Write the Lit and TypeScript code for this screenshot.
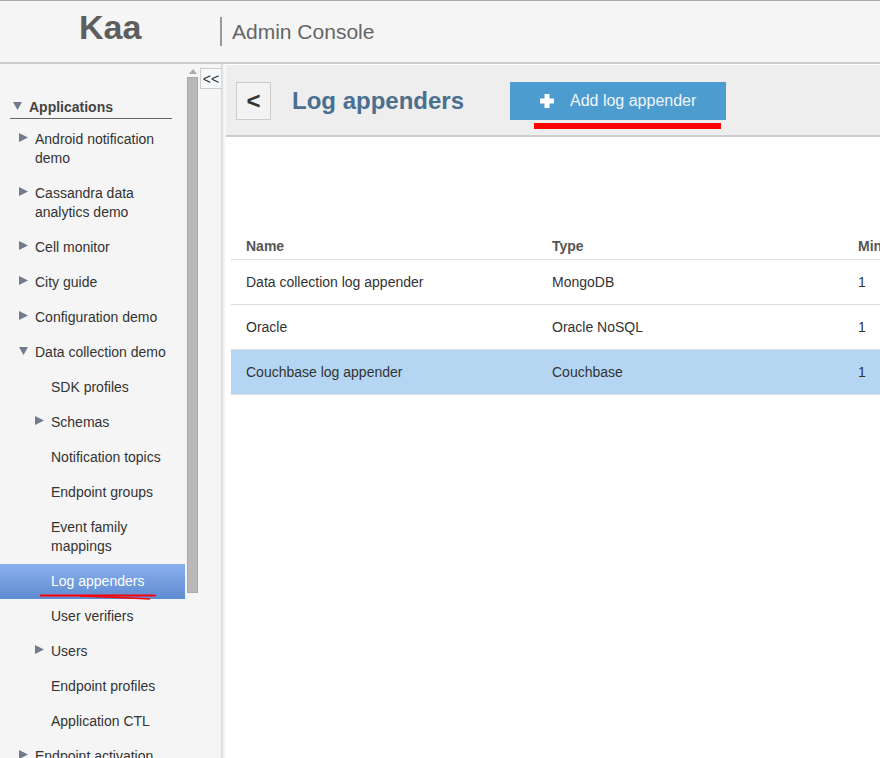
import { LitElement, css, html, svg } from 'lit'
import { customElement } from 'lit/decorators.js'

type TreeRow = { label: string; depth: number; arrow?: 'open' | 'closed'; selected?: boolean }

const treeRows: TreeRow[] = [
  { label: 'Android notification demo', depth: 0, arrow: 'closed' },
  { label: 'Cassandra data analytics demo', depth: 0, arrow: 'closed' },
  { label: 'Cell monitor', depth: 0, arrow: 'closed' },
  { label: 'City guide', depth: 0, arrow: 'closed' },
  { label: 'Configuration demo', depth: 0, arrow: 'closed' },
  { label: 'Data collection demo', depth: 0, arrow: 'open' },
  { label: 'SDK profiles', depth: 1 },
  { label: 'Schemas', depth: 1, arrow: 'closed' },
  { label: 'Notification topics', depth: 1 },
  { label: 'Endpoint groups', depth: 1 },
  { label: 'Event family mappings', depth: 1 },
  { label: 'Log appenders', depth: 1, selected: true },
  { label: 'User verifiers', depth: 1 },
  { label: 'Users', depth: 1, arrow: 'closed' },
  { label: 'Endpoint profiles', depth: 1 },
  { label: 'Application CTL', depth: 1 },
  { label: 'Endpoint activation', depth: 0, arrow: 'closed' }
]

const appenders = [
  { name: 'Data collection log appender', type: 'MongoDB', min: '1' },
  { name: 'Oracle', type: 'Oracle NoSQL', min: '1' },
  { name: 'Couchbase log appender', type: 'Couchbase', min: '1', selected: true }
]

const arrowClosed = svg`<path d="M0 0 L9 4.5 L0 9 Z" fill="#727b8c"/>`
const arrowOpen = svg`<path d="M0 1 L9 1 L4.5 9 Z" fill="#727b8c"/>`

@customElement('app-root')
export class AppRoot extends LitElement {
  renderArrow(kind?: 'open' | 'closed') {
    if (!kind) return html`<span class="arrow"></span>`
    return html`<svg class="arrow" width="10" height="10" viewBox="0 0 10 10">${kind === 'open' ? arrowOpen : arrowClosed}</svg>`
  }

  renderRow(row: TreeRow) {
    return html`
      <div class="tree-row depth-${row.depth} ${row.selected ? 'selected' : ''}">
        ${this.renderArrow(row.arrow)}
        <span class="tree-label">${row.label}</span>
        ${row.selected
          ? html`<svg class="scribble" width="120" height="8" viewBox="0 0 120 8">
              <path d="M0 2.5 L116 2.5" stroke="#f00" stroke-width="2" fill="none"/>
              <path d="M40 3 Q80 4.5 110 6" stroke="#f00" stroke-width="1.4" fill="none"/>
            </svg>`
          : ''}
      </div>
    `
  }

  render() {
    return html`
      <header class="top">
        <div class="logo">Kaa</div>
        <div class="console">Admin Console</div>
      </header>
      <div class="body">
        <nav class="sidebar">
          <div class="tree-head">
            ${this.renderArrow('open')}
            <span>Applications</span>
          </div>
          ${treeRows.map(row => this.renderRow(row))}
        </nav>
        <div class="scrollbar">
          <span class="scroll-up"></span>
          <span class="scroll-thumb"></span>
        </div>
        <div class="collapse-col"><button class="collapse">&lt;&lt;</button></div>
        <main class="main">
          <div class="toolbar">
            <button class="back">&lt;</button>
            <h1 class="title">Log appenders</h1>
            <button class="add">
              <svg width="14" height="14" viewBox="0 0 14 14"><path d="M4.5 0 H9.5 V4.5 H14 V9.5 H9.5 V14 H4.5 V9.5 H0 V4.5 H4.5 Z" fill="#fff"/></svg>
              <span>Add log appender</span>
              <span class="add-mark"></span>
            </button>
          </div>
          <div class="table">
            <div class="table-row head">
              <span>Name</span><span>Type</span><span>Min</span>
            </div>
            ${appenders.map(a => html`
              <div class="table-row ${a.selected ? 'selected' : ''}">
                <span>${a.name}</span><span>${a.type}</span><span>${a.min}</span>
              </div>
            `)}
          </div>
        </main>
      </div>
    `
  }

  static styles = css`
    :host {
      display: flex;
      flex-direction: column;
      width: 880px;
      height: 758px;
      overflow: hidden;
      background: #f5f5f5;
      font-family: "Liberation Sans", Arial, sans-serif;
      font-size: 14px;
      color: #333;
    }

    .top {
      flex: none;
      box-sizing: border-box;
      height: 64px;
      display: flex;
      border-top: 1px solid #aaa;
      border-bottom: 2px solid #ccc;
    }

    .logo {
      box-sizing: border-box;
      width: 220px;
      padding: 5px 0 0 79px;
      font-size: 34px;
      line-height: 42px;
      font-weight: bold;
      color: #5e5e5e;
    }

    .console {
      align-self: flex-start;
      margin-top: 16px;
      padding-left: 10px;
      height: 29px;
      border-left: 2px solid #999;
      font-size: 21px;
      line-height: 30px;
      color: #666;
    }

    .body {
      flex: 1;
      min-height: 0;
      display: flex;
    }

    .sidebar {
      flex: none;
      width: 185px;
      padding-top: 30px;
      overflow: hidden;
    }

    .tree-head {
      display: flex;
      align-items: flex-start;
      box-sizing: border-box;
      width: 162px;
      height: 25px;
      margin: 0 0 3px 10px;
      padding-left: 3px;
      border-bottom: 1px solid #666;
      font-weight: bold;
      line-height: 26px;
      color: #444;
    }

    .tree-head .arrow {
      margin: 7px 6px 0 0;
    }

    .tree-row {
      position: relative;
      display: flex;
      align-items: flex-start;
      padding: 8px 16px 8px 0;
      line-height: 19px;
    }

    .depth-0 {
      padding-left: 19px;
    }

    .depth-1 {
      padding-left: 35px;
    }

    .arrow {
      flex: none;
      width: 10px;
      height: 10px;
      margin: 3px 6px 0 0;
    }

    .tree-row.selected {
      background: linear-gradient(#8ab0ee, #5f8bd0);
      color: #fff;
    }

    .scribble {
      position: absolute;
      left: 40px;
      top: 29px;
    }

    .scrollbar {
      flex: none;
      box-sizing: border-box;
      width: 15px;
      padding: 5px 0 0 2px;
      display: flex;
      flex-direction: column;
      align-items: flex-start;
    }

    .scroll-up {
      width: 0;
      height: 0;
      margin: 0 0 3px 2px;
      border-left: 4px solid transparent;
      border-right: 4px solid transparent;
      border-bottom: 5px solid #aaa;
    }

    .scroll-thumb {
      box-sizing: border-box;
      width: 11px;
      height: 516px;
      background: #b8b8b8;
      border: 1px solid #aaa;
    }

    .collapse-col {
      flex: none;
      width: 21px;
      padding-top: 4px;
    }

    .collapse {
      display: block;
      box-sizing: border-box;
      width: 21px;
      height: 21px;
      padding: 0;
      background: #f8f8f8;
      border: 1px solid #ccc;
      border-right: none;
      font: 14px/16px "Liberation Sans", Arial, sans-serif;
      color: #333;
    }

    .main {
      flex: 1;
      min-width: 0;
      padding: 1px 0 0 5px;
      background: linear-gradient(90deg, #d2d2d2, #ececec 2px, #f8f8f8 4px, #fff 5px);
    }

    .toolbar {
      box-sizing: border-box;
      height: 72px;
      display: flex;
      align-items: flex-start;
      padding: 17px 0 0 10px;
      background: #eee;
      border-bottom: 2px solid #ccc;
    }

    .back {
      flex: none;
      width: 35px;
      height: 38px;
      padding: 0;
      background: #f3f3f3;
      border: 1px solid #ccc;
      font: bold 24px/34px "Liberation Sans", Arial, sans-serif;
      color: #333;
    }

    .title {
      flex: none;
      width: 218px;
      margin: 0 0 0 21px;
      font-size: 24px;
      line-height: 38px;
      font-weight: bold;
      color: #4a6f8f;
    }

    .add {
      position: relative;
      flex: none;
      box-sizing: border-box;
      width: 216px;
      height: 38px;
      display: flex;
      align-items: center;
      gap: 16px;
      padding: 0 0 0 30px;
      background: #4d9ccf;
      border: none;
      font: 16px "Liberation Sans", Arial, sans-serif;
      color: #f0f6fb;
    }

    .add-mark {
      position: absolute;
      left: 24px;
      top: 41px;
      width: 187px;
      height: 6px;
      background: #f00;
    }

    .table {
      margin: 96px 0 0 5px;
    }

    .table-row {
      display: grid;
      grid-template-columns: 306px 306px 306px;
      box-sizing: border-box;
      height: 45px;
      padding-left: 15px;
      border-bottom: 1px solid #ddd;
      line-height: 44px;
      white-space: nowrap;
    }

    .table-row.head {
      height: 27px;
      line-height: 26px;
      font-weight: bold;
      color: #555;
    }

    .table-row.selected {
      background: #b4d6f2;
    }
  `
}
